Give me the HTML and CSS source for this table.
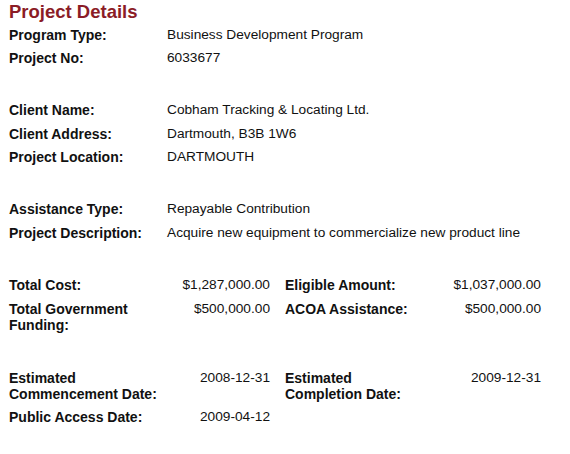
FILE: index.html
```html
<!DOCTYPE html>
<html lang="en">
<head>
<meta charset="utf-8">
<title>Project Details</title>
<link rel="stylesheet" href="styles.css">
</head>
<body>
<div class="page">
  <h1 class="title">Project Details</h1>

  <div class="group simple">
    <div class="label">Program Type:</div><div class="value">Business Development Program</div>
    <div class="label">Project No:</div><div class="value">6033677</div>
  </div>

  <div class="group simple">
    <div class="label">Client Name:</div><div class="value">Cobham Tracking &amp; Locating Ltd.</div>
    <div class="label">Client Address:</div><div class="value">Dartmouth, B3B 1W6</div>
    <div class="label">Project Location:</div><div class="value">DARTMOUTH</div>
  </div>

  <div class="group simple">
    <div class="label">Assistance Type:</div><div class="value">Repayable Contribution</div>
    <div class="label">Project Description:</div><div class="value">Acquire new equipment to commercialize new product line</div>
  </div>

  <div class="group quad">
    <div class="label">Total Cost:</div><div class="value num">$1,287,000.00</div>
    <div class="label second">Eligible Amount:</div><div class="value num">$1,037,000.00</div>
    <div class="label">Total Government Funding:</div><div class="value num">$500,000.00</div>
    <div class="label second">ACOA Assistance:</div><div class="value num">$500,000.00</div>
  </div>

  <div class="group quad">
    <div class="label">Estimated Commencement Date:</div><div class="value num">2008-12-31</div>
    <div class="label second">Estimated Completion Date:</div><div class="value num">2009-12-31</div>
    <div class="label">Public Access Date:</div><div class="value num">2009-04-12</div>
    <div class="label second"></div><div class="value num"></div>
  </div>
</div>
</body>
</html>
```

FILE: styles.css
```css
html, body {
  margin: 0;
  padding: 0;
  background: #ffffff;
}

body {
  font-family: "Liberation Sans", Arial, Helvetica, sans-serif;
  font-size: 14px;
  color: #111111;
}

.page {
  padding: 1px 9px 0 9px;
}

.title {
  margin: 0;
  font-size: 18.5px;
  line-height: 22px;
  font-weight: bold;
  color: #8b1c26;
}

.group {
  display: grid;
  margin-bottom: 29px;
}

.group.simple {
  grid-template-columns: 158px auto;
}

.group.quad {
  grid-template-columns: 158px 103px 150px 121px;
}

.label,
.value {
  line-height: 16.5px;
  padding: 3.5px 0 3.4px 0;
}

.label {
  font-weight: bold;
}

.value {
  font-size: 13.7px;
}

.value.num {
  text-align: right;
}

.label.second {
  padding-left: 15px;
}
```
